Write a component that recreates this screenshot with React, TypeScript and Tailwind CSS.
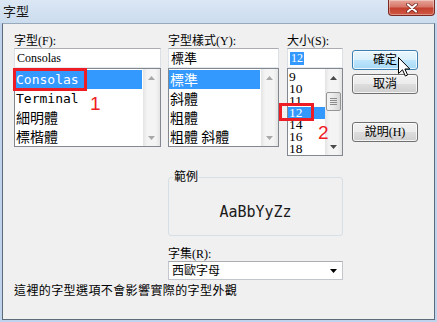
import type { ReactNode } from "react";

// Windows 7 "字型" font dialog with two red annotation marks
const ui = "font-['Liberation_Serif','Noto_Sans_CJK_TC',serif] text-[12px] leading-[14px] text-black";
const cjk14 = "font-['Noto_Sans_CJK_TC',sans-serif] text-[14px] leading-[19px]";
const mono = "font-['DejaVu_Sans_Mono',monospace] text-[13px] leading-[19px]";

const fontItems = [
  { label: "Consolas", cls: mono },
  { label: "Terminal", cls: mono },
  { label: "細明體", cls: cjk14 },
  { label: "標楷體", cls: cjk14 },
];

const styleItems = ["標準", "斜體", "粗體", "粗體 斜體"];
const sizeItems = ["9", "10", "11", "12", "14", "16", "18"];

function ScrollArrow({ dir, dark }: { dir: "up" | "down"; dark?: boolean }) {
  return (
    <div className="h-[17px] flex items-center justify-center">
      <svg width="7" height="4" viewBox="0 0 7 4">
        <path
          d={dir === "up" ? "M0 4 L3.5 0 L7 4 Z" : "M0 0 L7 0 L3.5 4 Z"}
          fill={dark ? "#4a4a4a" : "#a8a8a8"}
        />
      </svg>
    </div>
  );
}

function ScrollBar({ thumb }: { thumb?: boolean }) {
  return (
    <div className="w-[17px] flex flex-col bg-[linear-gradient(90deg,#e4e4e4,#f4f4f4_25%,#f4f4f4_75%,#e4e4e4)]">
      <ScrollArrow dir="up" dark={thumb} />
      <div className="flex-1 px-[1px]">
        {thumb && (
          <div className="mt-[6px] h-[19px] rounded-[2px] border border-[#959595] bg-[linear-gradient(90deg,#f4f4f4,#e9e9e9_50%,#d6d6d6)] flex flex-col items-center justify-center gap-[1px]">
            {[0, 1, 2, 3].map((i) => (
              <div key={i} className="w-[7px] h-[1px] bg-[#8c8c8c]" />
            ))}
          </div>
        )}
      </div>
      <ScrollArrow dir="down" dark={thumb} />
    </div>
  );
}

function TextBox({ children }: { children: ReactNode }) {
  return (
    <div className="h-[20px] border border-[#dbdfe6] border-t-[#abadb3] border-b-[#e3e9ef] bg-white flex items-center pl-[2px]">
      {children}
    </div>
  );
}

function Btn({ label, hot }: { label: string; hot?: boolean }) {
  return (
    <div
      className={`h-[20px] w-[66px] rounded-[3px] border flex items-center justify-center shadow-[inset_0_0_0_1px_rgba(255,255,255,0.75)] ${
        hot
          ? "border-[#3c7fb1] bg-[linear-gradient(#eaf6fd,#d9f0fc_50%,#bee6fd_51%,#a7d9f5)]"
          : "border-[#707070] bg-[linear-gradient(#f2f2f2,#ebebeb_50%,#dddddd_51%,#cfcfcf)]"
      }`}
    >
      {label}
    </div>
  );
}

function CloseButton() {
  return (
    <div className="mr-[2px] w-[47px] h-[16px] rounded-b-[4px] border border-t-0 border-[#7b2a22] bg-[linear-gradient(#e6a597,#d7776a_45%,#c4402f_55%,#cf5a44)] shadow-[inset_0_0_0_1px_rgba(255,255,255,0.35)] flex items-center justify-center">
      <svg width="12" height="10" viewBox="0 0 12 10">
        <path d="M2 1.5 L10 8.5 M10 1.5 L2 8.5" stroke="#6a1f17" strokeWidth="3.6" strokeLinecap="round" />
        <path d="M2 1.5 L10 8.5 M10 1.5 L2 8.5" stroke="#ffffff" strokeWidth="2.2" strokeLinecap="round" />
      </svg>
    </div>
  );
}

export default function App() {
  return (
    <div className={`relative w-[437px] h-[322px] overflow-hidden bg-[#bfd4ec] flex flex-col ${ui}`}>
      {/* Title bar */}
      <div className="h-[23px] flex justify-between bg-[linear-gradient(#dbe7f4,#cbdcee)]">
        <div className="pl-[3px] pt-[4px] text-[13px] leading-[14px] font-['Noto_Sans_CJK_TC',sans-serif] text-[#1b1b1b]">
          字型
        </div>
        <CloseButton />
      </div>

      {/* Client area */}
      <div className="flex-1 mx-[2px] mb-[2px] border border-[#5c6b7a] border-t-[#98a9bb] bg-[#f0f0f0] pl-[11px] pt-[10px] flex flex-col">
        <div className="flex items-start">
          {/* 字型 */}
          <div className="w-[147px] flex flex-col">
            <div className="h-[14px]">字型(F):</div>
            <TextBox>Consolas</TextBox>
            <div className="h-[79px] border border-[#828790] bg-white flex">
              <div className="flex-1 pt-[1px]">
                {fontItems.map((it, i) => (
                  <div
                    key={it.label}
                    className={`h-[19px] pl-[1px] mr-[1px] ${i === 0 ? "bg-[#3399ff] text-white" : "text-black"}`}
                  >
                    <span className={it.cls}>{it.label}</span>
                  </div>
                ))}
              </div>
              <ScrollBar />
            </div>
          </div>

          {/* 字型樣式 */}
          <div className="ml-[7px] w-[111px] flex flex-col">
            <div className="h-[14px]">字型樣式(Y):</div>
            <TextBox>
              <span className="font-['Noto_Sans_CJK_TC',sans-serif] text-[13px]">標準</span>
            </TextBox>
            <div className="h-[79px] border border-[#828790] bg-white flex">
              <div className="flex-1 pt-[1px]">
                {styleItems.map((s, i) => (
                  <div
                    key={s}
                    className={`h-[19px] pl-[1px] mr-[1px] ${cjk14} ${i === 0 ? "bg-[#3399ff] text-white" : "text-black"}`}
                  >
                    {s}
                  </div>
                ))}
              </div>
              <ScrollBar />
            </div>
          </div>

          {/* 大小 */}
          <div className="ml-[8px] w-[56px] flex flex-col">
            <div className="h-[14px]">大小(S):</div>
            <TextBox>
              <span className="bg-[#3399ff] text-white px-[1px] leading-[13px]">12</span>
            </TextBox>
            <div className="h-[88px] border border-[#828790] bg-white flex">
              <div className="flex-1 pt-[2px]">
                {sizeItems.map((s) => (
                  <div
                    key={s}
                    className={`h-[12px] pl-[1px] font-['Liberation_Serif',serif] text-[13.5px] leading-[12px] ${
                      s === "12" ? "bg-[#3399ff] text-white" : "text-black"
                    }`}
                  >
                    {s}
                  </div>
                ))}
              </div>
              <ScrollBar thumb />
            </div>
          </div>

          {/* Buttons */}
          <div className="ml-[9px] pt-[16px] flex flex-col">
            <Btn label="確定" hot />
            <div className="mt-[4px]">
              <Btn label="取消" />
            </div>
            <div className="mt-[28px]">
              <Btn label="說明(H)" />
            </div>
          </div>
        </div>

        {/* 範例 */}
        <fieldset className="ml-[154px] mt-[16px] w-[175px] h-[64px] border border-[#d5dfe5] rounded-[3px]">
          <legend className="ml-[4px] px-[1px] leading-[11px]">範例</legend>
          <div className="pt-[20px] text-center font-['DejaVu_Sans_Mono',monospace] text-[15px] leading-[18px] text-[#1a1a1a]">
            AaBbYyZz
          </div>
        </fieldset>

        <div className="ml-[154px] mt-[11px] h-[14px]">字集(R):</div>
        <div className="ml-[154px] w-[175px] h-[19px] border border-[#c3c6cc] border-t-[#abadb3] bg-white flex items-center justify-between pl-[3px] pr-[5px]">
          <span>西歐字母</span>
          <svg width="7" height="4" viewBox="0 0 7 4">
            <path d="M0 0 L7 0 L3.5 4 Z" fill="#000" />
          </svg>
        </div>

        <div className="mt-[4px] h-[14px] tracking-[0.4px]">這裡的字型選項不會影響實際的字型外觀</div>
      </div>

      {/* Annotations */}
      <div className="absolute left-[13px] top-[68px] w-[74px] h-[23px] border-[3px] border-[#ee1c24]" />
      <div className="absolute left-[90px] top-[94px] text-[19px] leading-[19px] font-['Liberation_Sans',sans-serif] text-[#ee1c24]">
        1
      </div>
      <div className="absolute left-[279px] top-[103px] w-[35px] h-[18px] border-[3px] border-[#ee1c24]" />
      <div className="absolute left-[318px] top-[123px] text-[19px] leading-[19px] font-['Liberation_Sans',sans-serif] text-[#ee1c24]">
        2
      </div>

      {/* Mouse cursor */}
      <svg className="absolute left-[398px] top-[57px]" width="13" height="20" viewBox="0 0 13 20">
        <polygon
          points="0.5,0.5 0.5,16.5 4.5,12.8 7.3,19 9.6,18 6.9,12 11.8,12"
          fill="#ffffff"
          stroke="#000000"
          strokeWidth="1"
          strokeLinejoin="round"
        />
      </svg>
    </div>
  );
}
